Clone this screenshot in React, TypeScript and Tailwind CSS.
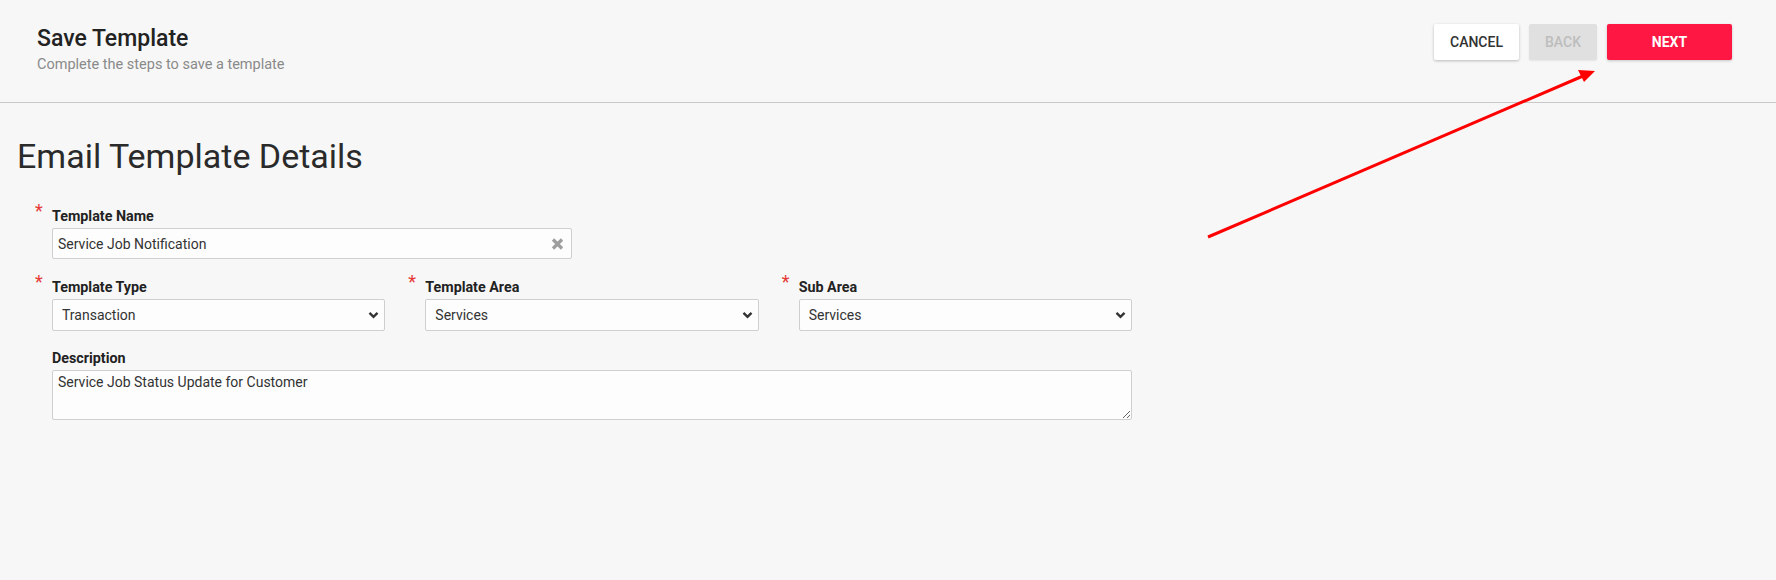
import React from 'react';

const RequiredMark: React.FC = () => (
    <span className="absolute -left-[17px] -top-[4px] text-[18px] leading-none text-[#e53935]">*</span>
);

const ChevronDown: React.FC = () => (
    <svg className="pointer-events-none absolute right-[6px] top-1/2 -translate-y-1/2" width="11" height="8" viewBox="0 0 11 8">
        <path d="M1.5 1.8 L5.5 5.8 L9.5 1.8" fill="none" stroke="#333" strokeWidth="2.4" />
    </svg>
);

interface SelectFieldProps {
    label: string;
    value: string;
}

const SelectField: React.FC<SelectFieldProps> = ({ label, value }) => (
    <div className="relative">
        <RequiredMark />
        <label className="block text-[14.3px] leading-[20px] font-bold text-[#222]">{label}</label>
        <div className="relative mt-[2px]">
            <select
                defaultValue={value}
                className="block h-[32px] w-full appearance-none rounded-[2px] border border-[#cfcfcf] bg-[#fdfdfd] pl-[9px] pr-6 text-[14px] text-[#333] outline-none"
            >
                <option>{value}</option>
            </select>
            <ChevronDown />
        </div>
    </div>
);

export default function App() {
    return (
        <div className="relative h-[580px] w-full overflow-hidden bg-[#f7f7f7] font-['Roboto',sans-serif]">
            {/* header */}
            <div className="flex h-[103px] items-start justify-between border-b border-[#c8c8c8] pl-[37px] pr-[44px]">
                <div className="pt-[25px]">
                    <h1 className="text-[23px] leading-[27px] font-medium text-[#222]">Save Template</h1>
                    <p className="mt-[3px] text-[14.5px] leading-[20px] text-[#8a8a8a]">Complete the steps to save a template</p>
                </div>
                <div className="mt-[24px] flex gap-[10px]">
                    <button className="h-[36px] w-[85px] rounded-[2px] bg-white text-[14px] font-medium text-[#333] shadow-[0_1px_3px_rgba(0,0,0,0.25)]">
                        CANCEL
                    </button>
                    <button disabled className="h-[36px] w-[68px] rounded-[2px] bg-[#e0e0e0] text-[14px] font-medium text-[#bdbdbd] shadow-[0_1px_2px_rgba(0,0,0,0.08)]">
                        BACK
                    </button>
                    <button className="h-[36px] w-[125px] rounded-[2px] bg-[#ff1744] text-[14px] font-bold text-white shadow-[0_1px_3px_rgba(0,0,0,0.2)]">
                        NEXT
                    </button>
                </div>
            </div>

            {/* body */}
            <div className="pl-[17px]">
                <h2 className="mt-[33px] text-[34px] leading-[40px] text-[#2a2a2a]">Email Template Details</h2>

                <div className="mt-[30px] ml-[35px] w-[1080px]">
                    <div className="relative w-[520px]">
                        <RequiredMark />
                        <label className="block text-[14.3px] leading-[20px] font-bold text-[#222]">Template Name</label>
                        <div className="relative mt-[2px]">
                            <input
                                defaultValue="Service Job Notification"
                                className="block h-[31px] w-full rounded-[2px] border border-[#cfcfcf] bg-[#fdfdfd] pl-[5px] pr-8 text-[14px] text-[#333] outline-none"
                            />
                            <svg className="absolute right-[8px] top-1/2 -translate-y-1/2" width="13" height="13" viewBox="0 0 13 13">
                                <path d="M2 2 L11 11 M11 2 L2 11" stroke="#9e9e9e" strokeWidth="3.2" />
                            </svg>
                        </div>
                    </div>

                    <div className="mt-[18px] grid grid-cols-3 gap-x-10">
                        <SelectField label="Template Type" value="Transaction" />
                        <SelectField label="Template Area" value="Services" />
                        <SelectField label="Sub Area" value="Services" />
                    </div>

                    <div className="mt-[17px]">
                        <label className="block text-[14.3px] leading-[20px] font-bold text-[#222]">Description</label>
                        <textarea
                            defaultValue="Service Job Status Update for Customer"
                            className="mt-[2px] block h-[50px] w-full rounded-[2px] border border-[#cfcfcf] bg-[#fdfdfd] px-[5px] pt-[2px] text-[14px] leading-[18px] text-[#333] outline-none"
                        />
                    </div>
                </div>
            </div>

            {/* annotation arrow */}
            <svg className="pointer-events-none absolute inset-0" width="1776" height="580" viewBox="0 0 1776 580">
                <line x1="1208" y1="237" x2="1583" y2="76" stroke="#ff0000" strokeWidth="3" />
                <polygon points="1595,71 1584,82 1578,70" fill="#ff0000" />
            </svg>
        </div>
    );
}
